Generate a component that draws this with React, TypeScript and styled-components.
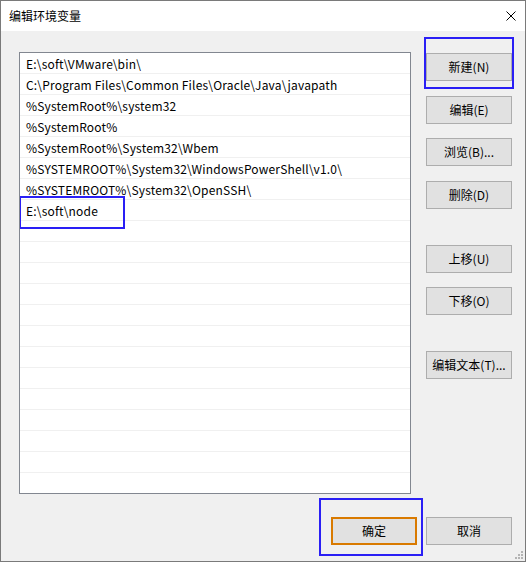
import React from 'react';
import styled, { createGlobalStyle } from 'styled-components';

const GlobalStyle = createGlobalStyle`
  html, body {
    margin: 0;
    padding: 0;
    background: #ffffff;
  }
  * {
    box-sizing: border-box;
  }
`;

const paths = [
    'E:\\soft\\VMware\\bin\\',
    'C:\\Program Files\\Common Files\\Oracle\\Java\\javapath',
    '%SystemRoot%\\system32',
    '%SystemRoot%',
    '%SystemRoot%\\System32\\Wbem',
    '%SYSTEMROOT%\\System32\\WindowsPowerShell\\v1.0\\',
    '%SYSTEMROOT%\\System32\\OpenSSH\\',
    'E:\\soft\\node',
];

const TOTAL_ROWS = 21;

const Window = styled.div`
  width: 526px;
  height: 562px;
  border: 1px solid #7a7a7a;
  display: flex;
  flex-direction: column;
  font-family: "Noto Sans CJK SC", "Noto Sans", sans-serif;
  font-size: 12px;
  color: #000;
  background: #f0f0f0;
`;

const TitleBar = styled.div`
  height: 30px;
  flex-shrink: 0;
  background: #ffffff;
  display: flex;
  align-items: center;
  justify-content: space-between;
  padding: 0 9px 0 8px;
`;

const Title = styled.span`
  font-size: 12px;
  line-height: 16px;
`;

const CloseIcon = styled.svg`
  width: 10px;
  height: 10px;
  display: block;
`;

const Body = styled.div`
  flex: 1;
  position: relative;
  padding: 21px 13px 0 18px;
  display: flex;
  flex-direction: column;
`;

const MainRow = styled.div`
  display: flex;
  gap: 15px;
`;

const PathList = styled.div`
  width: 392px;
  height: 442px;
  border: 1px solid #828790;
  background: #ffffff;
  overflow: hidden;
`;

const PathRow = styled.div`
  position: relative;
  height: 21px;
  border-bottom: 1px solid #f0f0f0;
  padding-left: 6px;
  line-height: 21px;
  letter-spacing: 0.18px;
  white-space: nowrap;
`;

const Side = styled.div`
  width: 86px;
  display: flex;
  flex-direction: column;
  padding-top: 1px;
`;

const ButtonWrap = styled.div<{ $top?: number }>`
  position: relative;
  margin-top: ${p => p.$top ?? 0}px;
`;

const Button = styled.button<{ $primary?: boolean }>`
  width: 86px;
  height: 28px;
  padding: 0 0 1px;
  background: #e1e1e1;
  border: ${p => (p.$primary ? '2px solid #d97a00' : '1px solid #adadad')};
  font-family: inherit;
  font-size: 12px;
  color: #000;
  display: flex;
  align-items: center;
  justify-content: center;
`;

const Footer = styled.div`
  display: flex;
  justify-content: flex-end;
  gap: 9px;
  margin-top: 23px;
`;

const Mark = styled.div<{ $left: number; $top: number; $w: number; $h: number }>`
  position: absolute;
  left: ${p => p.$left}px;
  top: ${p => p.$top}px;
  width: ${p => p.$w}px;
  height: ${p => p.$h}px;
  border: 2px solid #2a1ff5;
  pointer-events: none;
`;

const Grip = styled.svg`
  position: absolute;
  right: 1px;
  bottom: 1px;
  width: 9px;
  height: 9px;
`;

export default function App() {
    const rows = Array.from({ length: TOTAL_ROWS }, (_, i) => paths[i] ?? '');

    return (
        <>
            <GlobalStyle />
            <Window>
                <TitleBar>
                    <Title>编辑环境变量</Title>
                    <CloseIcon viewBox="0 0 10 10">
                        <path d="M0.5 0.5 L9.5 9.5 M9.5 0.5 L0.5 9.5" stroke="#000" strokeWidth="1" fill="none" />
                    </CloseIcon>
                </TitleBar>
                <Body>
                    <MainRow>
                        <PathList>
                            {rows.map((p, i) => (
                                <PathRow key={i}>
                                    {p}
                                    {i === 7 && <Mark $left={-1} $top={-4} $w={106} $h={33} />}
                                </PathRow>
                            ))}
                        </PathList>
                        <Side>
                            <ButtonWrap>
                                <Button>新建(N)</Button>
                                <Mark $left={-2} $top={-16} $w={90} $h={52} />
                            </ButtonWrap>
                            <ButtonWrap $top={15}>
                                <Button>编辑(E)</Button>
                            </ButtonWrap>
                            <ButtonWrap $top={14}>
                                <Button>浏览(B)...</Button>
                            </ButtonWrap>
                            <ButtonWrap $top={15}>
                                <Button>删除(D)</Button>
                            </ButtonWrap>
                            <ButtonWrap $top={36}>
                                <Button>上移(U)</Button>
                            </ButtonWrap>
                            <ButtonWrap $top={14}>
                                <Button>下移(O)</Button>
                            </ButtonWrap>
                            <ButtonWrap $top={36}>
                                <Button>编辑文本(T)...</Button>
                            </ButtonWrap>
                        </Side>
                    </MainRow>
                    <Footer>
                        <ButtonWrap>
                            <Button $primary>确定</Button>
                            <Mark $left={-12} $top={-19} $w={104} $h={58} />
                        </ButtonWrap>
                        <ButtonWrap>
                            <Button>取消</Button>
                        </ButtonWrap>
                    </Footer>
                    <Grip viewBox="0 0 9 9">
                        <rect x="6" y="0" width="2" height="2" fill="#b4b4b4" />
                        <rect x="3" y="3" width="2" height="2" fill="#b4b4b4" />
                        <rect x="6" y="3" width="2" height="2" fill="#b4b4b4" />
                        <rect x="0" y="6" width="2" height="2" fill="#b4b4b4" />
                        <rect x="3" y="6" width="2" height="2" fill="#b4b4b4" />
                        <rect x="6" y="6" width="2" height="2" fill="#b4b4b4" />
                    </Grip>
                </Body>
            </Window>
        </>
    );
}
